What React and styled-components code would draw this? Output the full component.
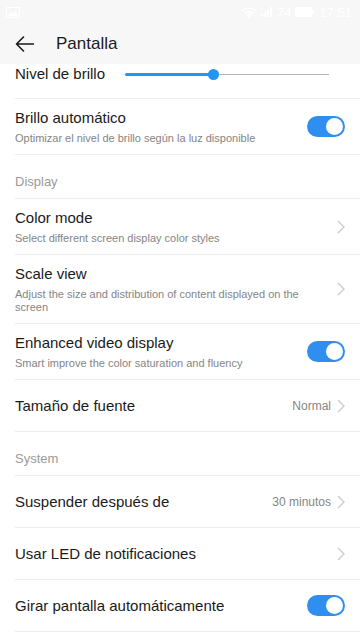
import React from "react";
import styled, { createGlobalStyle } from "styled-components";

const GlobalStyle = createGlobalStyle`
  html, body {
    margin: 0;
    padding: 0;
    background: #ffffff;
  }
  body {
    font-family: "Liberation Sans", Arial, sans-serif;
    -webkit-font-smoothing: antialiased;
  }
`;

const Screen = styled.div`
  width: 360px;
  min-height: 640px;
  display: flex;
  flex-direction: column;
  background: #ffffff;
  color: #1a1a1a;
`;

const TopBar = styled.header`
  background: #f7f7f7;
  display: flex;
  flex-direction: column;
`;

const StatusBar = styled.div`
  height: 24px;
  display: flex;
  align-items: center;
  justify-content: space-between;
  padding: 0 8px 0 6px;
  color: #ffffff;
  font-size: 13px;
`;

const StatusRight = styled.div`
  display: flex;
  align-items: center;
  gap: 4px;
`;

const Toolbar = styled.div`
  height: 40px;
  display: flex;
  align-items: center;
  padding-left: 15px;
  gap: 22px;
`;

const Title = styled.h1`
  margin: 0;
  font-size: 17px;
  font-weight: 400;
  color: #1a1a1a;
`;

const List = styled.div`
  display: flex;
  flex-direction: column;
`;

const Row = styled.div`
  display: flex;
  align-items: center;
  margin-left: 15px;
  padding: ${(p) => p.$pad || "0"};
  padding-right: 15px;
  min-height: ${(p) => p.$h || 0}px;
  border-bottom: 1px solid #ececec;
  box-sizing: border-box;
`;

const Texts = styled.div`
  flex: 1;
  display: flex;
  flex-direction: column;
  min-width: 0;
`;

const Label = styled.div`
  font-size: 15px;
  line-height: 20px;
  color: #1a1a1a;
`;

const Sub = styled.div`
  margin-top: 4px;
  font-size: 11px;
  line-height: 13px;
  color: #858585;
  padding-right: 24px;
`;

const Section = styled.div`
  margin-left: 15px;
  padding: 19px 0 8px;
  font-size: 13px;
  line-height: 16px;
  color: #9a9a9a;
  border-bottom: 1px solid #ececec;
`;

const Value = styled.span`
  font-size: 12px;
  color: #858585;
  margin-right: 6px;
`;

const Track = styled.div`
  flex: 1;
  margin: 0 16px 0 20px;
  height: 11px;
  display: flex;
  align-items: center;
`;

const Filled = styled.div`
  height: 3px;
  background: #2196f3;
  border-radius: 2px;
`;

const Rest = styled.div`
  flex: 1;
  height: 1px;
  background: #b5b5b5;
`;

const Thumb = styled.div`
  width: 11px;
  height: 11px;
  border-radius: 50%;
  background: #2196f3;
  margin-left: -5px;
  margin-right: -6px;
  position: relative;
  z-index: 1;
`;

const SwitchBody = styled.div`
  width: 38px;
  height: 21px;
  border-radius: 11px;
  background: #2f8ff0;
  display: flex;
  align-items: center;
  justify-content: flex-end;
  padding-right: 2px;
  box-sizing: border-box;
  flex-shrink: 0;
`;

const Knob = styled.div`
  width: 17px;
  height: 17px;
  border-radius: 50%;
  background: #ffffff;
`;

const Toggle = () => (
  <SwitchBody>
    <Knob />
  </SwitchBody>
);

const Chevron = () => (
  <svg width="8" height="14" viewBox="0 0 8 14" style={{ flexShrink: 0 }}>
    <path d="M1 1l6 6-6 6" fill="none" stroke="#c9c9c9" strokeWidth="1.3" />
  </svg>
);

const BackArrow = () => (
  <svg width="19" height="16" viewBox="0 0 19 16">
    <path
      d="M18.5 8H1.5M8.5 1L1.5 8l7 7"
      fill="none"
      stroke="#1a1a1a"
      strokeWidth="1.6"
      strokeLinecap="round"
      strokeLinejoin="round"
    />
  </svg>
);

const StatusIcons = () => (
  <StatusRight>
    <svg width="16" height="11" viewBox="0 0 16 11">
      <path d="M1 4a10 10 0 0 1 14 0M3.5 6.5a6.5 6.5 0 0 1 9 0M8 10l2-2a3 3 0 0 0-4 0z" fill="none" stroke="#fff" strokeWidth="1.4" />
    </svg>
    <svg width="12" height="10" viewBox="0 0 12 10">
      <rect x="0" y="7" width="2" height="3" fill="#fff" />
      <rect x="3" y="5" width="2" height="5" fill="#fff" />
      <rect x="6" y="3" width="2" height="7" fill="#fff" />
      <rect x="9" y="0" width="2" height="10" fill="#fff" />
    </svg>
    <span>74</span>
    <svg width="20" height="10" viewBox="0 0 20 10">
      <rect x="0" y="0" width="17" height="10" rx="1" fill="#fff" />
      <rect x="17" y="3" width="2" height="4" fill="#fff" />
    </svg>
    <span>17:51</span>
  </StatusRight>
);

const NavRow = ({ label, sub, value, h = 52 }) => (
  <Row $h={h} $pad={sub ? "9px 0 9px" : "0"}>
    <Texts>
      <Label>{label}</Label>
      {sub && <Sub>{sub}</Sub>}
    </Texts>
    {value && <Value>{value}</Value>}
    <Chevron />
  </Row>
);

const SwitchRow = ({ label, sub, h = 52 }) => (
  <Row $h={h} $pad={sub ? "9px 0 9px" : "0"}>
    <Texts>
      <Label>{label}</Label>
      {sub && <Sub>{sub}</Sub>}
    </Texts>
    <Toggle />
  </Row>
);

export default function App() {
  return (
    <>
      <GlobalStyle />
      <Screen>
        <TopBar>
          <StatusBar>
            <svg width="14" height="11" viewBox="0 0 14 11">
              <rect x="0.5" y="0.5" width="13" height="10" fill="none" stroke="#fff" />
              <path d="M2 9l3-4 2 2 2-3 3 5z" fill="#fff" />
            </svg>
            <StatusIcons />
          </StatusBar>
          <Toolbar>
            <BackArrow />
            <Title>Pantalla</Title>
          </Toolbar>
        </TopBar>
        <List>
          <Row $h={35} $pad="0 0 14px">
            <Label>Nivel de brillo</Label>
            <Track>
              <Filled style={{ width: "43%" }} />
              <Thumb />
              <Rest />
            </Track>
          </Row>
          <SwitchRow
            label="Brillo automático"
            sub="Optimizar el nivel de brillo según la luz disponible"
            h={56}
          />
          <Section>Display</Section>
          <NavRow
            label="Color mode"
            sub="Select different screen display color styles"
            h={56}
          />
          <NavRow
            label="Scale view"
            sub="Adjust the size and distribution of content displayed on the screen"
            h={56}
          />
          <SwitchRow
            label="Enhanced video display"
            sub="Smart improve the color saturation and fluency"
            h={56}
          />
          <NavRow label="Tamaño de fuente" value="Normal" />
          <Section>System</Section>
          <NavRow label="Suspender después de" value="30 minutos" />
          <NavRow label="Usar LED de notificaciones" />
          <SwitchRow label="Girar pantalla automáticamente" />
        </List>
      </Screen>
    </>
  );
}
